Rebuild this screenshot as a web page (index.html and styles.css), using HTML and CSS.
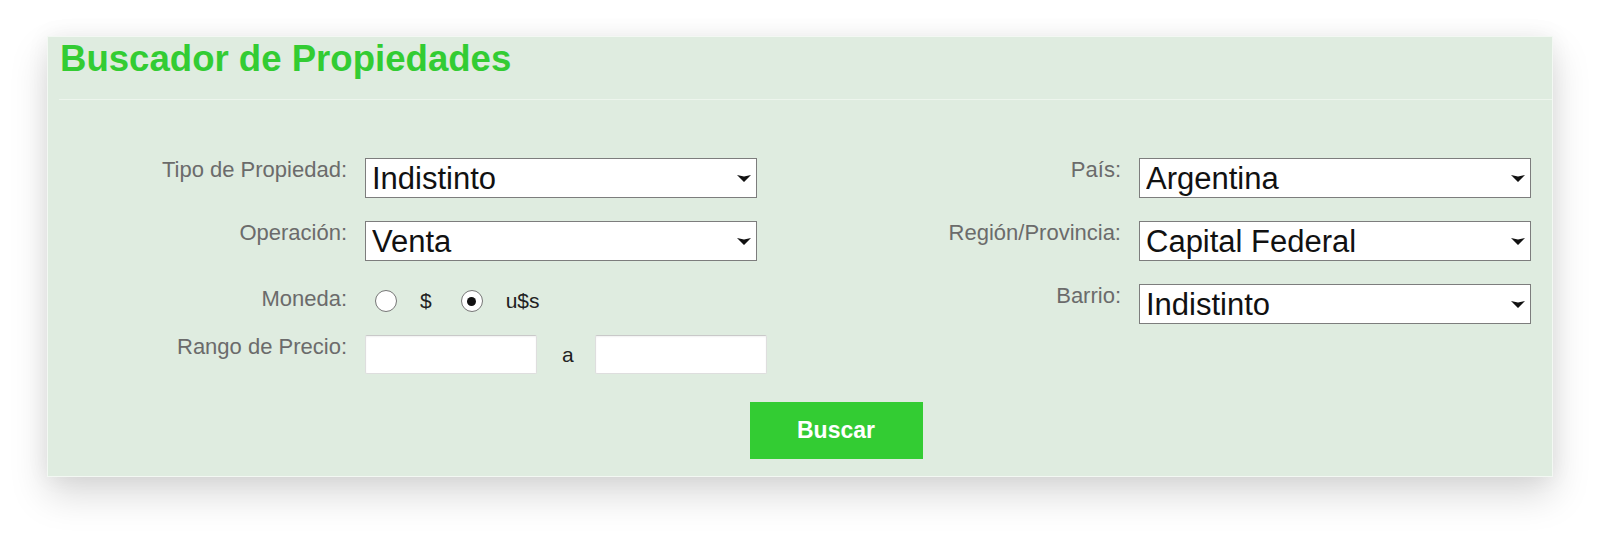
FILE: index.html
```html
<!DOCTYPE html>
<html lang="es">
<head>
<meta charset="utf-8">
<title>Buscador de Propiedades</title>
<link rel="stylesheet" href="styles.css">
</head>
<body>
<div class="panel">
  <h2 class="title">Buscador de Propiedades</h2>
  <hr class="rule">
  <form class="search">
    <div class="cols">
      <div class="group group-left">
        <label class="lbl" for="tipo">Tipo de Propiedad:</label>
        <span class="sel">
          <select id="tipo"><option>Indistinto</option></select>
          <svg class="caret" viewBox="0 0 14 7" width="14" height="7"><path d="M0 0 L7 1.6 L14 0 L7 7 Z"/></svg>
        </span>

        <label class="lbl" for="oper">Operación:</label>
        <span class="sel">
          <select id="oper"><option>Venta</option></select>
          <svg class="caret" viewBox="0 0 14 7" width="14" height="7"><path d="M0 0 L7 1.6 L14 0 L7 7 Z"/></svg>
        </span>

        <span class="lbl lbl-radio">Moneda:</span>
        <span class="radios">
          <input type="radio" name="moneda" id="m-pesos" class="radio">
          <label for="m-pesos" class="opt">$</label>
          <input type="radio" name="moneda" id="m-dolar" class="radio" checked>
          <label for="m-dolar" class="opt">u$s</label>
        </span>

        <label class="lbl" for="desde">Rango de Precio:</label>
        <span class="range">
          <input type="text" id="desde" class="txt">
          <span class="sep">a</span>
          <input type="text" id="hasta" class="txt">
        </span>
      </div>

      <div class="group group-right">
        <label class="lbl" for="pais">País:</label>
        <span class="sel">
          <select id="pais"><option>Argentina</option></select>
          <svg class="caret" viewBox="0 0 14 7" width="14" height="7"><path d="M0 0 L7 1.6 L14 0 L7 7 Z"/></svg>
        </span>

        <label class="lbl" for="region">Región/Provincia:</label>
        <span class="sel">
          <select id="region"><option>Capital Federal</option></select>
          <svg class="caret" viewBox="0 0 14 7" width="14" height="7"><path d="M0 0 L7 1.6 L14 0 L7 7 Z"/></svg>
        </span>

        <label class="lbl" for="barrio">Barrio:</label>
        <span class="sel">
          <select id="barrio"><option>Indistinto</option></select>
          <svg class="caret" viewBox="0 0 14 7" width="14" height="7"><path d="M0 0 L7 1.6 L14 0 L7 7 Z"/></svg>
        </span>
      </div>
    </div>
    <div class="actions">
      <button type="submit" class="btn">Buscar</button>
    </div>
  </form>
</div>
</body>
</html>
```

FILE: styles.css
```css
* {
  box-sizing: border-box;
}

html, body {
  margin: 0;
  padding: 0;
  background: #ffffff;
}

body {
  font-family: "Liberation Sans", Arial, sans-serif;
  min-height: 533px;
  padding: 36px 0 56px 47px;
}

.panel {
  width: 1506px;
  padding: 1px 0 17px 12px;
  background: #dfece0;
  border: 1px solid #f3f8f3;
  box-shadow: 0 18px 36px rgba(0, 0, 0, 0.15), 0 0 22px rgba(0, 0, 0, 0.06);
}

.title {
  margin: 0;
  font-size: 36.6px;
  line-height: 41px;
  font-weight: bold;
  color: #33cc33;
}

.rule {
  margin: 20px 0 0 -1px;
  height: 1px;
  border: 0;
  background: #edf5ed;
}

.search {
  margin: 58px 0 0 60px;
}

.cols {
  display: flex;
  justify-content: space-between;
  padding-right: 21px;
}

.group {
  display: grid;
  grid-template-columns: 227px 392px;
  column-gap: 18px;
  row-gap: 23px;
}

.group-left {
  grid-template-rows: 40px 40px 28px 39px;
}

.group-right {
  grid-template-rows: 40px 40px 40px;
}

.lbl {
  text-align: right;
  font-size: 22px;
  line-height: 24px;
  color: #6b6b6b;
}

.lbl-radio {
  margin-top: 3px;
}

.sel {
  position: relative;
  display: block;
  height: 40px;
}

.sel select {
  appearance: none;
  -webkit-appearance: none;
  width: 392px;
  height: 40px;
  margin: 0;
  padding: 0 28px 0 6px;
  border: 1px solid #7d7d7d;
  border-radius: 0;
  background: #ffffff;
  font-family: "Liberation Sans", Arial, sans-serif;
  font-size: 31px;
  color: #111111;
}

.caret {
  position: absolute;
  right: 6px;
  top: 17px;
  fill: #111111;
  pointer-events: none;
}

.radios {
  display: flex;
  align-items: center;
  height: 22px;
  margin-top: 6px;
  padding-left: 10px;
}

.radio {
  appearance: none;
  -webkit-appearance: none;
  width: 22px;
  height: 22px;
  margin: 0;
  border: 1.5px solid #767676;
  border-radius: 50%;
  background: #ffffff;
  display: grid;
  place-items: center;
}

.radio:checked::after {
  content: "";
  width: 9px;
  height: 9px;
  border-radius: 50%;
  background: #111111;
}

.opt {
  font-size: 21px;
  color: #222222;
  margin: 0 29px 0 23px;
}

.opt:last-child {
  margin-right: 0;
}

.range {
  display: flex;
  align-items: center;
  width: 420px;
}

.txt {
  width: 172px;
  height: 39px;
  margin: 0;
  border: 1px solid #dedede;
  border-top-color: #c9c9c9;
  border-radius: 2px;
  background: #ffffff;
  box-shadow: inset 0 1px 2px rgba(0, 0, 0, 0.06);
  font-family: "Liberation Sans", Arial, sans-serif;
  font-size: 18px;
}

.sep {
  margin: 0 21px 0 25px;
  font-size: 21px;
  color: #222222;
}

.actions {
  display: flex;
  justify-content: center;
  margin-top: 28px;
}

.btn {
  width: 173px;
  height: 57px;
  border: 0;
  border-radius: 0;
  background: #33cc33;
  color: #ffffff;
  font-family: "Liberation Sans", Arial, sans-serif;
  font-size: 23px;
  font-weight: bold;
  cursor: pointer;
}
```
